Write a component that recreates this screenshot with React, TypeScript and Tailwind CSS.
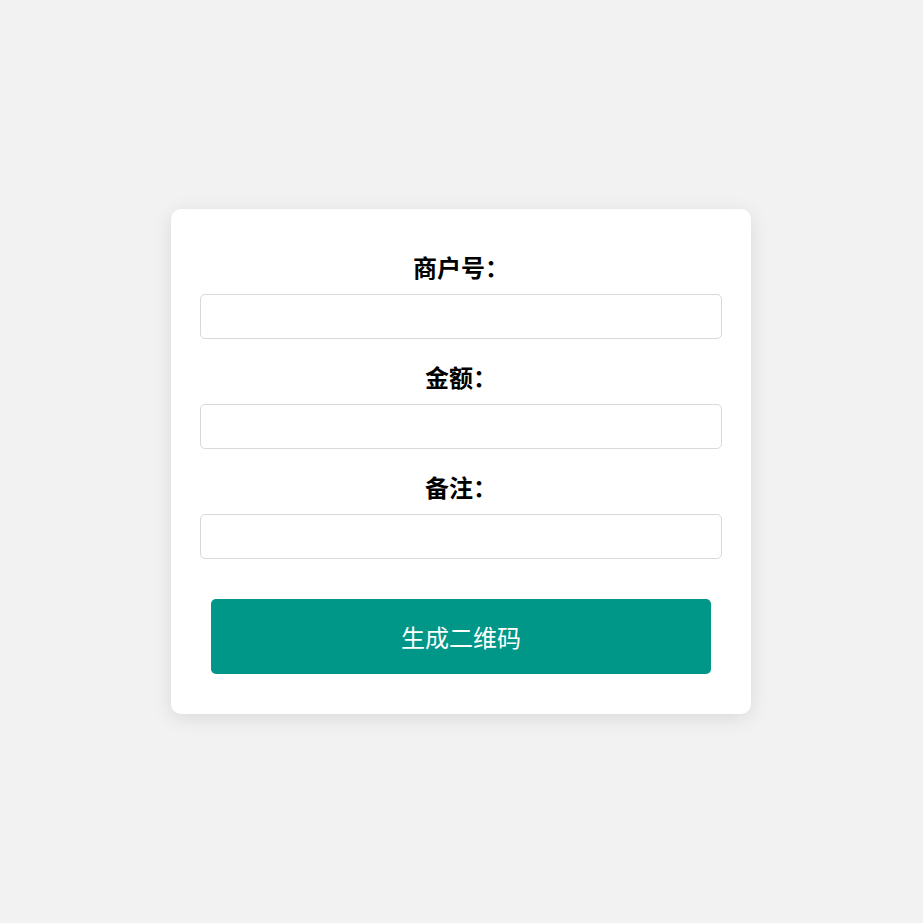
import React from "react";

const font = { fontFamily: '"Noto Sans CJK SC", "Noto Sans", sans-serif' };

function Field({ label, first }: { label: string; first?: boolean }) {
  return (
    <div className={first ? "" : "mt-[22px]"}>
      <label className="block text-center text-[24px] leading-[32px] font-bold text-black mb-[11px]">
        {label}
      </label>
      <input
        type="text"
        className="block w-full h-[45px] rounded-[5px] border border-[#d9d9d9] bg-white px-3 text-[16px] outline-none"
      />
    </div>
  );
}

export default function App() {
  return (
    <div className="min-h-[923px] w-full bg-[#f2f2f2] flex justify-center pt-[209px] pr-[1px]" style={font}>
      <div className="w-[580px] h-[505px] bg-white rounded-[10px] shadow-[0_4px_20px_rgba(0,0,0,0.1)] px-[29px] pt-[42px] pb-[40px] flex flex-col">
        <Field label="商户号：" first />
        <Field label="金额：" />
        <Field label="备注：" />
        <button className="mt-[40px] mx-auto w-[500px] h-[75px] rounded-[5px] bg-[#009688] text-white text-[24px]">
          生成二维码
        </button>
      </div>
    </div>
  );
}
